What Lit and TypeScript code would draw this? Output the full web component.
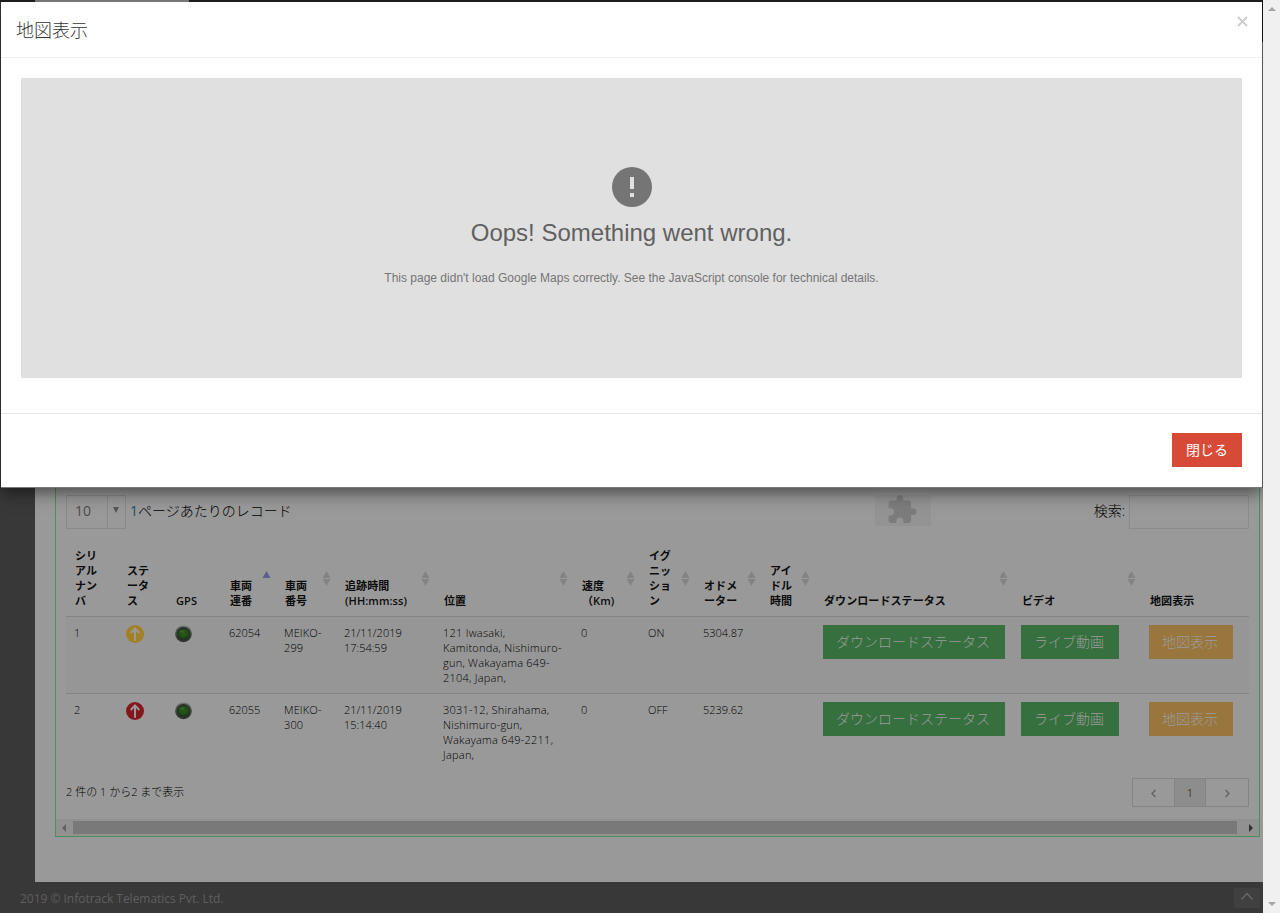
import { LitElement, html, css, svg } from "lit";
import { customElement, property } from "lit/decorators.js";

interface Column {
  lines: string[];
  sort?: "asc" | "both";
}

interface Vehicle {
  no: string;
  color: string;
  serial: string;
  plate: string[];
  time: string[];
  place: string[];
  speed: string;
  ignition: string;
  odometer: string;
}

const COLUMNS: Column[] = [
  { lines: ["シリ", "アル", "ナン", "バ"] },
  { lines: ["ステ", "ータ", "ス"] },
  { lines: ["GPS"] },
  { lines: ["車両", "連番"], sort: "asc" },
  { lines: ["車両", "番号"], sort: "both" },
  { lines: ["追跡時間", "(HH:mm:ss)"], sort: "both" },
  { lines: ["位置"], sort: "both" },
  { lines: ["速度", "（Km)"], sort: "both" },
  { lines: ["イグ", "ニッ", "ショ", "ン"], sort: "both" },
  { lines: ["オドメ", "ーター"], sort: "both" },
  { lines: ["アイ", "ドル", "時間"], sort: "both" },
  { lines: ["ダウンロードステータス"], sort: "both" },
  { lines: ["ビデオ"], sort: "both" },
  { lines: ["地図表示"] },
];

const VEHICLES: Vehicle[] = [
  {
    no: "1", color: "#a28124", serial: "62054",
    plate: ["MEIKO-", "299"], time: ["21/11/2019", "17:54:59"],
    place: ["121 Iwasaki,", "Kamitonda, Nishimuro-", "gun, Wakayama 649-", "2104, Japan,"],
    speed: "0", ignition: "ON", odometer: "5304.87",
  },
  {
    no: "2", color: "#84171c", serial: "62055",
    plate: ["MEIKO-", "300"], time: ["21/11/2019", "15:14:40"],
    place: ["3031-12, Shirahama,", "Nishimuro-gun,", "Wakayama 649-2211,", "Japan,"],
    speed: "0", ignition: "OFF", odometer: "5239.62",
  },
];

const stack = (lines: string[]) => lines.map((l) => html`<div>${l}</div>`);

@customElement("vehicle-table")
export class VehicleTable extends LitElement {
  static styles = css`
    :host { display: block; font-size: 11px; line-height: 15px; }
    .row {
      display: grid;
      grid-template-columns: 52px 49px 54px 55px 60px 99px 138px 67px 55px 66px 54px 198px 128px 108px;
      white-space: nowrap;
    }
    .head { height: 69px; border-bottom: 1px solid #848484; font-weight: 600; color: #0c0c0c; }
    .th { display: flex; align-items: flex-end; justify-content: space-between; padding: 0 5px 8px 9px; }
    .label { width: 0; letter-spacing: 0.08px; }
    .sort { display: block; width: 9px; height: 15px; margin-bottom: 22px; flex: none; }
    .body { height: 76px; }
    .body + .body { border-top: 1px solid #848484; }
    .odd { background: #969696; }
    .td { padding: 8px 0 8px 8px; color: #000; }
    .plate { letter-spacing: 0.15px; }
    .place { letter-spacing: 0.24px; }
    .icon { display: block; width: 18px; height: 18px; }
    .button {
      display: inline-flex; align-items: center; height: 34px; padding: 0 15px 2px 13px;
      font-size: 14px; color: #9c9c9c; background: #35703e; box-sizing: border-box;
    }
    .amber { background: #99763e; }
  `;

  sortIcon(kind?: string) {
    if (!kind) return "";
    const up = kind === "asc" ? "#5d5d8f" : "#838383";
    return html`<svg class="sort" viewBox="0 0 9 15">
      <path d="M.5 7 4.5 0l4 7z" fill=${up} />
      ${kind === "both" ? svg`<path d="M.5 8h8l-4 7z" fill=${up} />` : ""}
    </svg>`;
  }

  render() {
    return html`
      <div class="row head">
        ${COLUMNS.map((c) => html`<div class="th"><div class="label">${stack(c.lines)}</div>${this.sortIcon(c.sort)}</div>`)}
      </div>
      ${VEHICLES.map((v, i) => html`
        <div class="row body ${i % 2 ? "" : "odd"}">
          <div class="td">${v.no}</div>
          <div class="td">
            <svg class="icon" viewBox="0 0 18 18">
              <circle cx="9" cy="9" r="9" fill=${v.color} />
              <path d="M9 15.8V3.5M4.7 8 9 3.4 13.300 8" fill="none" stroke="#999" stroke-width="2" />
            </svg>
          </div>
          <div class="td">
            <svg class="icon" viewBox="0 0 18 18">
              <defs>
                <radialGradient id="led" cx=".5" cy=".45" r=".5">
                  <stop offset="0" stop-color="#27591a" /><stop offset=".75" stop-color="#214d16" /><stop offset="1" stop-color="#1a3513" />
                </radialGradient>
                <linearGradient id="rim" x1="0" y1="0" x2="0" y2="1">
                  <stop offset="0" stop-color="#777" /><stop offset=".4" stop-color="#4c4c4c" /><stop offset="1" stop-color="#2e2e2e" />
                </linearGradient>
              </defs>
              <circle cx="8.500" cy="8.800" r="8.400" fill="url(#rim)" />
              <circle cx="8.500" cy="8.800" r="6.800" fill="#2a2e29" />
              <ellipse cx="8.500" cy="9" rx="6.200" ry="5.300" fill="url(#led)" />
              <ellipse cx="7" cy="6.500" rx="2.500" ry="1" fill="#4c7a3d" opacity=".45" />
            </svg>
          </div>
          <div class="td">${v.serial}</div>
          <div class="td plate">${stack(v.plate)}</div>
          <div class="td">${stack(v.time)}</div>
          <div class="td place">${stack(v.place)}</div>
          <div class="td">${v.speed}</div>
          <div class="td">${v.ignition}</div>
          <div class="td">${v.odometer}</div>
          <div class="td"></div>
          <div class="td"><span class="button">ダウンロードステータス</span></div>
          <div class="td"><span class="button">ライブ動画</span></div>
          <div class="td"><span class="button amber">地図表示</span></div>
        </div>`)}
    `;
  }
}

@customElement("map-dialog")
export class MapDialog extends LitElement {
  @property() heading = "";

  static styles = css`
    :host {
      display: flex; flex-direction: column; box-sizing: border-box; background: #fff;
      border-bottom: 1px solid #777; box-shadow: 0 5px 15px rgba(0, 0, 0, 0.5);
    }
    .header {
      display: flex; justify-content: space-between; align-items: center; box-sizing: border-box;
      height: 56px; padding: 0 14px 2px 15px; border-bottom: 1px solid #efefef;
      font-size: 18px; color: #333;
    }
    .close { width: 11px; height: 11px; margin-bottom: 14px; }
    .map {
      height: 300px; margin: 20px 20px 35px; background: #e0e0e0; box-sizing: border-box;
      display: flex; flex-direction: column; align-items: center; padding-top: 89px;
      font-family: "Liberation Sans", Arial, sans-serif; font-weight: 400; white-space: nowrap;
    }
    .alert { width: 40px; height: 40px; }
    .title { font-size: 24px; line-height: 28px; margin-top: 12px; color: #616161; }
    .message { font-size: 12px; line-height: 16px; margin-top: 23px; color: #757575; }
    .footer { flex: 1; display: flex; justify-content: flex-end; align-items: flex-start; padding: 19px 20px; border-top: 1px solid #e5e5e5; }
    .dismiss { height: 34px; padding: 0 14px 2px; box-sizing: border-box; display: flex; align-items: center; background: #d84a38; color: #fff; font-size: 14px; font-weight: 400; }
  `;

  render() {
    return html`
      <div class="header">
        <span>${this.heading}</span>
        <svg class="close" viewBox="0 0 11 11"><path d="M1 1l9 9M10 1l-9 9" stroke="#ccc" stroke-width="1.800" /></svg>
      </div>
      <div class="map">
        <svg class="alert" viewBox="0 0 40 40">
          <circle cx="20" cy="20" r="20" fill="#757575" />
          <path d="M18 10h4v12h-4zM18 26h4v4h-4z" fill="#e0e0e0" />
        </svg>
        <div class="title">Oops! Something went wrong.</div>
        <div class="message">This page didn't load Google Maps correctly. See the JavaScript console for technical details.</div>
      </div>
      <div class="footer"><span class="dismiss">閉じる</span></div>
    `;
  }
}

@customElement("app-root")
export class AppRoot extends LitElement {
  static styles = css`
    :host {
      display: grid; grid-template-columns: 1263px 17px; width: 1280px; height: 913px;
      overflow: hidden; position: relative; background: #383838;
      font-family: "Open Sans", "Noto Sans CJK JP", sans-serif; font-weight: 300; font-size: 14px;
    }
    .page { display: flex; flex-direction: column; height: 913px; }
    .strip { height: 2px; background: #231f20; padding-left: 35px; flex: none; }
    .tab { width: 154px; height: 2px; background: #858585; }
    .content { flex: 1; margin-left: 35px; background: #999; padding: 0 3px 45px 20px; display: flex; }
    .panel { flex: 1; border: 1px solid #528c5a; display: flex; flex-direction: column; min-width: 0; }
    .tools { margin: 492px 10px 0; height: 34px; display: flex; align-items: center; color: #000; }
    .select { width: 60px; height: 34px; box-sizing: border-box; border: 1px solid #898989; display: flex; color: #333; }
    .value { width: 40px; box-sizing: border-box; padding-left: 8px; line-height: 30px; font-weight: 400; color: #4c4c4c; }
    .arrow { flex: 1; border-left: 1px solid #898989; display: flex; align-items: center; justify-content: center; }
    .arrow svg { width: 6px; height: 6px; margin: -4px 1px 0 0; }
    .per { margin-left: 4px; line-height: 32px; height: 34px; }
    .per span { color: #1f4e5c; font-weight: 400; }
    .puzzle { margin-left: 583px; width: 56px; height: 31px; margin-bottom: 3px; background: #939393; display: flex; justify-content: center; }
    .puzzle svg { width: 33px; height: 33px; margin-top: -1px; }
    .find { margin-left: auto; height: 34px; line-height: 32px; }
    .input { width: 120px; height: 34px; box-sizing: border-box; border: 1px solid #8b8b8b; margin-left: 4px; }
    .table { margin: 18px 10px 0; }
    .below { display: flex; justify-content: space-between; margin: 8px 10px 0; height: 29px; }
    .info { font-size: 11px; line-height: 27px; color: #000; }
    .pager { display: flex; border: 1px solid #848484; box-sizing: border-box; height: 29px; width: 117px; }
    .pager div { display: flex; align-items: center; justify-content: center; flex: 1; }
    .pager .prev { flex: none; width: 41px; }
    .pager .now { flex: none; width: 30px; background: #8d8d8d; border: solid #848484; border-width: 0 1px; font-size: 11px; font-weight: 400; color: #4b3a2e; }
    .pager svg { width: 7px; height: 9px; margin-top: 2px; }
    .hscroll { margin-top: auto; height: 17px; background: #919191; display: flex; align-items: center; justify-content: space-between; padding: 0 6px; }
    .thumb { flex: 1; height: 13px; background: #797979; margin: 0 12px 0 7px; }
    .hscroll svg { width: 4px; height: 8px; }
    .footer { height: 31px; flex: none; display: flex; align-items: center; justify-content: space-between; padding: 0 3px 0 20px; font-size: 12px; font-weight: 400; color: #5f5f5f; }
    .copy { margin-top: 2px; letter-spacing: -0.02px; }
    .top { width: 26px; height: 20px; background: #404040; display: flex; justify-content: center; }
    .top svg { width: 14px; height: 16px; }
    .vscroll { background: #f0f0f0; display: flex; flex-direction: column; justify-content: space-between; align-items: center; padding: 7px 0; }
    .vscroll svg { width: 8px; height: 4px; }
    .shade { position: absolute; left: 0; top: 0; width: 1263px; height: 540px; overflow: hidden; }
    .dialog { position: absolute; left: 1px; top: 2px; width: 1261px; height: 486px; }
    .edge { position: absolute; left: 1262px; top: 0; width: 1px; height: 488px; background: linear-gradient(#111 42px, #555 42px); }
  `;

  render() {
    return html`
      <div class="page">
        <div class="strip"><div class="tab"></div></div>
        <div class="content">
          <div class="panel">
            <div class="tools">
              <div class="select">
                <div class="value">10</div>
                <div class="arrow"><svg viewBox="0 0 6 6"><path d="M0 0h6L3 6z" fill="#555" /></svg></div>
              </div>
              <div class="per"><span>1</span>ページあたりのレコード</div>
              <div class="puzzle">
                <svg viewBox="0 0 25 25"><path fill="#7c7c7c" d="M20.500 11H19V7c0-1.100-.9-2-2-2h-4V3.500a2.500 2.500 0 0 0-5 0V5H4c-1.100 0-1.990.9-1.990 2v3.800H3.500c1.490 0 2.700 1.210 2.700 2.700s-1.210 2.700-2.700 2.700H2V20c0 1.100.9 2 2 2h3.800v-1.500c0-1.490 1.210-2.700 2.700-2.700s2.700 1.210 2.700 2.700V22H17c1.100 0 2-.9 2-2v-4h1.500a2.500 2.500 0 0 0 0-5z" /></svg>
              </div>
              <div class="find">検索:</div>
              <div class="input"></div>
            </div>
            <vehicle-table class="table"></vehicle-table>
            <div class="below">
              <div class="info">2 件の 1 から2 まで表示</div>
              <div class="pager">
                <div class="prev"><svg viewBox="0 0 7 9"><path d="M5.500 1 2 4.500 5.500 8" fill="none" stroke="#606060" stroke-width="1.300" /></svg></div>
                <div class="now">1</div>
                <div><svg viewBox="0 0 7 9"><path d="M1.500 1 5 4.500 1.500 8" fill="none" stroke="#606060" stroke-width="1.300" /></svg></div>
              </div>
            </div>
            <div class="hscroll">
              <svg viewBox="0 0 4 8"><path d="M4 0v8L0 4z" fill="#636363" /></svg>
              <div class="thumb"></div>
              <svg viewBox="0 0 4 8"><path d="M0 0v8l4-4z" fill="#303030" /></svg>
            </div>
          </div>
        </div>
        <div class="footer">
          <span class="copy">2019 © Infotrack Telematics Pvt. Ltd.</span>
          <span class="top"><svg viewBox="0 0 14 16"><path d="M1.500 11.500 7 5.500l5.500 6" fill="none" stroke="#686868" stroke-width="1.300" /></svg></span>
        </div>
      </div>
      <div class="vscroll">
        <svg viewBox="0 0 8 4"><path d="M0 4h8L4 0z" fill="#a3a3a3" /></svg>
        <svg viewBox="0 0 8 4"><path d="M0 0h8L4 4z" fill="#a3a3a3" /></svg>
      </div>
      <div class="shade">
        <map-dialog class="dialog" heading="地図表示"></map-dialog>
        <div class="edge"></div>
      </div>
    `;
  }
}
